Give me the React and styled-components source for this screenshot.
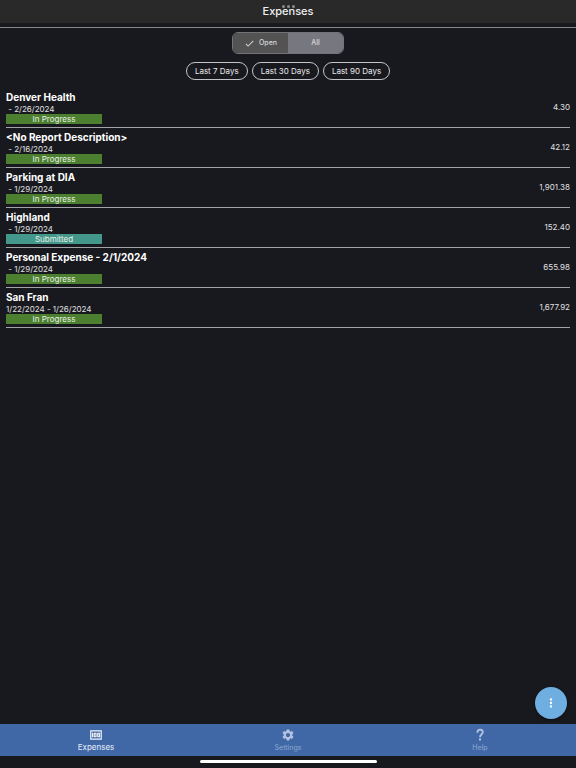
import React, { useState } from "react";
import styled, { createGlobalStyle } from "styled-components";
import { MdCheck, MdMoney, MdMoreVert, MdSettings } from "react-icons/md";

const GlobalStyle = createGlobalStyle`
  *, *::before, *::after { box-sizing: border-box; }
  body { margin: 0; background: #18191e; }
  button { font: inherit; color: inherit; border: 0; margin: 0; padding: 0; background: none; cursor: pointer; }
`;

const Page = styled.div`
  display: flex;
  flex-direction: column;
  min-height: 100vh;
  background: #18191e;
  color: #f0f0f2;
  font-family: Inter, "Liberation Sans", sans-serif;
  font-size: 8px;
  line-height: 12px;
`;

const Header = styled.header`
  position: relative;
  height: 23px;
  display: flex;
  justify-content: center;
  background: #292929;
`;

const Title = styled.h1`
  margin: 0;
  font-size: 11px;
  line-height: 23px;
  font-weight: 500;
`;

const WindowDots = styled.div`
  position: absolute;
  top: 5px;
  left: 0;
  right: 0;
  display: flex;
  justify-content: center;
  gap: 2px;

  span {
    width: 3px;
    height: 3px;
    border-radius: 50%;
    background: #8c8c8c;
  }
`;

const Main = styled.main`
  flex: 1;
  margin-top: 4px;
  border-top: 1px solid #85868a;
`;

const Segments = styled.div`
  display: flex;
  width: 112px;
  height: 22px;
  margin: 4px auto 0;
  border: 1px solid #73737a;
  border-radius: 6px;
  overflow: hidden;
`;

const Segment = styled.button`
  flex: 1;
  display: flex;
  align-items: center;
  justify-content: center;
  gap: 4px;
  font-size: 7px;
  font-weight: 500;
  background: ${(p) => (p.$active ? "#535353" : "#777780")};
  color: #d8d8da;

  svg { font-size: 11px; }
`;

const Chips = styled.div`
  display: flex;
  justify-content: center;
  gap: 4px;
  margin-top: 8px;
`;

const Chip = styled.button`
  height: 18px;
  padding: 0 8px;
  border: 1px solid #c4c4c8;
  border-radius: 9px;
  color: #ececee;
`;

const List = styled.ul`
  list-style: none;
  margin: 8px 6px 0;
  padding: 0;
`;

const Row = styled.li`
  display: flex;
  align-items: center;
  justify-content: space-between;
  height: 40px;
  padding-top: 3px;
  padding-bottom: 3px;
  border-bottom: 1px solid #a4a4a8;
`;

const Name = styled.h2`
  margin: 0;
  font-size: 10px;
  line-height: 13px;
  font-weight: 700;
  color: #ffffff;
`;

const Dates = styled.div`
  line-height: 10px;
  color: #e0e0e2;
  white-space: pre;
`;

const Badge = styled.div`
  width: 96px;
  line-height: 10px;
  text-align: center;
  background: ${(p) => (p.$status === "Submitted" ? "#43978b" : "#4c8030")};
  color: #e8f0e6;
`;

const Amount = styled.div`
  padding-bottom: 2px;
  color: #e0e0e2;
`;

const Fab = styled.button`
  position: fixed;
  right: 9px;
  bottom: 49px;
  width: 32px;
  height: 32px;
  display: flex;
  align-items: center;
  justify-content: center;
  border-radius: 50%;
  background: #6eaee0;
  color: #ffffff;
  font-size: 14px;
  box-shadow: 0 1px 3px #00000080;
`;

const Tabs = styled.nav`
  display: flex;
  height: 32px;
  background: #4068a7;
`;

const Tab = styled.button`
  flex: 1;
  display: flex;
  flex-direction: column;
  align-items: center;
  padding-top: 4px;
  font-size: ${(p) => (p.$active ? "8px" : "7px")};
  line-height: 11px;
  color: ${(p) => (p.$active ? "#e6edf7" : "#8fa8cf")};

  svg {
    width: 14px;
    height: 14px;
    color: ${(p) => (p.$active ? "#f2f5fa" : "#b3c3df")};
  }
`;

const HomeArea = styled.div`
  height: 12px;
  padding-top: 4px;
`;

const HomeIndicator = styled.div`
  width: 177px;
  height: 3px;
  margin: 0 auto;
  border-radius: 2px;
  background: #ffffff;
`;

const HelpIcon = () => (
  <svg viewBox="0 0 14 14" fill="none" stroke="currentColor" strokeWidth="1.8" aria-hidden="true">
    <path d="M4.4 4.7C4.4 2.7 5.5 1.7 7.1 1.7S9.8 2.8 9.8 4.2C9.8 6.2 7 6.4 7 9.3" />
    <path d="M7 10.6v2" strokeWidth="2" />
  </svg>
);

const reports = [
  { name: "Denver Health", dates: " - 2/26/2024", status: "In Progress", amount: "4.30" },
  { name: "<No Report Description>", dates: " - 2/16/2024", status: "In Progress", amount: "42.12" },
  { name: "Parking at DIA", dates: " - 1/29/2024", status: "In Progress", amount: "1,901.38" },
  { name: "Highland", dates: " - 1/29/2024", status: "Submitted", amount: "152.40" },
  { name: "Personal Expense - 2/1/2024", dates: " - 1/29/2024", status: "In Progress", amount: "655.98" },
  { name: "San Fran", dates: "1/22/2024 - 1/26/2024", status: "In Progress", amount: "1,677.92" },
];

const tabs = [
  { label: "Expenses", Icon: MdMoney },
  { label: "Settings", Icon: MdSettings },
  { label: "Help", Icon: HelpIcon },
];

export default function App() {
  const [filter, setFilter] = useState("Open");
  const [tab, setTab] = useState("Expenses");

  return (
    <Page>
      <GlobalStyle />
      <Header>
        <Title>Expenses</Title>
        <WindowDots aria-hidden="true"><span /><span /><span /></WindowDots>
      </Header>
      <Main>
        <Segments role="group" aria-label="Report filter">
          {["Open", "All"].map((name) => (
            <Segment key={name} $active={filter === name} aria-pressed={filter === name} onClick={() => setFilter(name)}>
              {filter === name && <MdCheck />}
              {name}
            </Segment>
          ))}
        </Segments>
        <Chips>
          {[7, 30, 90].map((days) => (
            <Chip key={days}>Last {days} Days</Chip>
          ))}
        </Chips>
        <List>
          {reports.map((r) => (
            <Row key={r.name}>
              <div>
                <Name>{r.name}</Name>
                <Dates>{r.dates}</Dates>
                <Badge $status={r.status}>{r.status}</Badge>
              </div>
              <Amount>{r.amount}</Amount>
            </Row>
          ))}
        </List>
      </Main>
      <Fab aria-label="More actions"><MdMoreVert /></Fab>
      <Tabs>
        {tabs.map(({ label, Icon }) => (
          <Tab key={label} $active={tab === label} onClick={() => setTab(label)}>
            <Icon />
            {label}
          </Tab>
        ))}
      </Tabs>
      <HomeArea><HomeIndicator /></HomeArea>
    </Page>
  );
}
